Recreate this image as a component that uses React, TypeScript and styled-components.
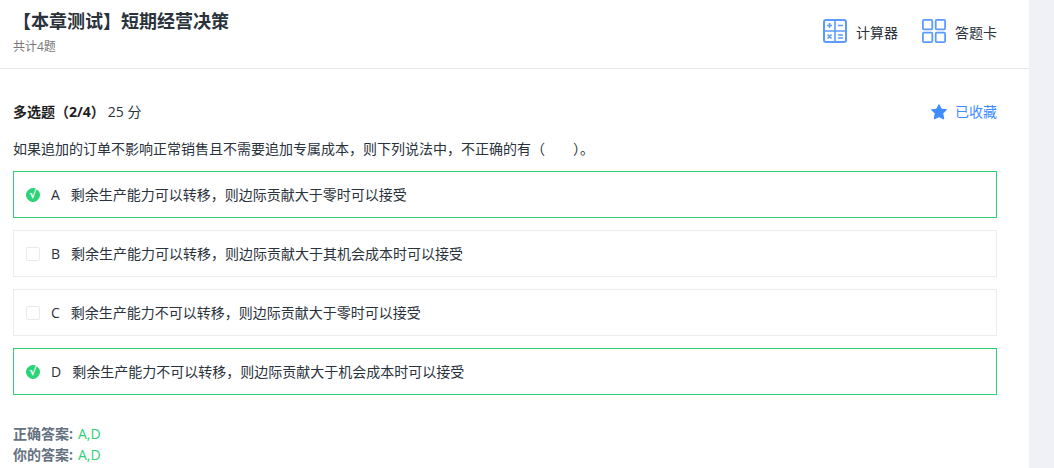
import React, { useState } from "react";
import styled, { createGlobalStyle } from "styled-components";

const GlobalStyle = createGlobalStyle`
  * { box-sizing: border-box; }
  body {
    margin: 0;
    background: #eff1f6;
    color: #2a323c;
    font-family: "Open Sans", "Noto Sans CJK SC", sans-serif;
    font-size: 14px;
    line-height: 20px;
  }
  button, input { font: inherit; }
`;

const Page = styled.div`
  min-height: 100vh;
  margin-right: 25px;
  background: #fff;
`;

const Header = styled.header`
  display: flex;
  justify-content: space-between;
  align-items: flex-start;
  padding: 8px 32px 11px 13px;
  border-bottom: 1px solid #e6e6e8;
`;

const Title = styled.h1`
  margin: 0 0 3px;
  font-size: 18px;
  line-height: 26px;
  font-weight: 700;
`;

const Subtitle = styled.p`
  margin: 0;
  color: #777;
  font-size: 12px;
  line-height: 20px;
`;

const Tools = styled.nav`
  display: flex;
  gap: 24px;
  padding-top: 11px;
`;

const IconButton = styled.button<{ $accent?: boolean }>`
  display: flex;
  align-items: center;
  gap: ${(p) => (p.$accent ? 8 : 9)}px;
  padding: 0;
  border: 0;
  background: none;
  color: ${(p) => (p.$accent ? "#3f8cff" : "#2a323c")};
  line-height: 20px;
  cursor: pointer;

  svg { flex: none; }
  span { padding-top: ${(p) => (p.$accent ? 0 : 4)}px; }
`;

const Main = styled.main`
  padding: 33px 32px 0 13px;
`;

const QuestionBar = styled.div`
  display: flex;
  justify-content: space-between;
  align-items: center;
  margin-bottom: 17px;
`;

const QuestionType = styled.h2`
  display: flex;
  gap: 3px;
  margin: 0;
  font-size: 14px;
  line-height: 20px;
  font-weight: 400;

  strong { color: #1e1e1e; font-weight: 700; }
`;

const Question = styled.fieldset`
  min-width: 0;
  margin: 0;
  padding: 0;
  border: 0;
`;

const Stem = styled.legend`
  padding: 0 0 12px;
  line-height: 20px;
  white-space: pre-wrap;
`;

const Options = styled.div`
  display: flex;
  flex-direction: column;
  gap: 12px;
`;

const Option = styled.label<{ $checked: boolean }>`
  display: flex;
  align-items: center;
  min-height: 47px;
  padding: 0 12px;
  border: 1px solid ${(p) => (p.$checked ? "#2fcf78" : "#ebecf0")};
  cursor: pointer;
`;

const Check = styled.input`
  appearance: none;
  display: grid;
  place-items: center;
  flex: none;
  width: 14px;
  height: 14px;
  margin: 0 11px 0 0;
  border: 1px solid #e8eaf0;
  border-radius: 2px;
  background: #fff;

  &:checked {
    border-color: #2bd377;
    border-radius: 50%;
    background: #2bd377;
  }
  &:checked::before {
    content: "√";
    color: #fff;
    font-family: "DejaVu Sans", sans-serif;
    font-size: 11px;
    font-weight: 700;
    line-height: 12px;
  }
`;

const Letter = styled.span`
  margin-right: 11px;
`;

const Answers = styled.dl`
  margin: 28px 0 0;
  line-height: 21px;
`;

const Answer = styled.div`
  display: flex;
  gap: 5px;

  dt { color: #66717f; font-weight: 700; }
  dd { margin: 0; color: #2fcf78; }
`;

const CalculatorIcon = () => (
  <svg width="24" height="24" viewBox="0 0 24 24" fill="none" stroke="#5b9bff" strokeWidth="1.6" aria-hidden="true">
    <rect x="1" y="1" width="22" height="22" rx="2" strokeWidth="2" />
    <path d="M12 1v22M1 12h22" />
    <path d="M4 6.5h5M6.5 4v5M15 6.5h5M4.5 15.5l4 4M8.5 15.5l-4 4M15 16h5M15 19h5" />
  </svg>
);

const GridIcon = () => (
  <svg width="24" height="24" viewBox="0 0 24 24" fill="none" stroke="#5b9bff" strokeWidth="1.8" aria-hidden="true">
    <rect x="0.9" y="0.9" width="9.4" height="9.4" rx="1" />
    <rect x="13.7" y="0.9" width="9.4" height="9.4" rx="1" />
    <rect x="0.9" y="13.7" width="9.4" height="9.4" rx="1" />
    <rect x="13.7" y="13.7" width="9.4" height="9.4" rx="1" />
  </svg>
);

const StarIcon = () => (
  <svg width="16" height="16" viewBox="0 0 16 16" fill="#3f8cff" stroke="#3f8cff" strokeWidth="1" strokeLinejoin="round" aria-hidden="true">
    <path d="M8 .6l2.3 4.5 5.2.7-3.7 3.6.9 5.6L8 12.7 3.3 15l.9-5.6L.5 5.8l5.2-.7z" />
  </svg>
);

const options = [
  { id: "A", text: "剩余生产能力可以转移，则边际贡献大于零时可以接受" },
  { id: "B", text: "剩余生产能力可以转移，则边际贡献大于其机会成本时可以接受" },
  { id: "C", text: "剩余生产能力不可以转移，则边际贡献大于零时可以接受" },
  { id: "D", text: "剩余生产能力不可以转移，则边际贡献大于机会成本时可以接受" },
];

export default function App() {
  const [selected, setSelected] = useState<string[]>(["A", "D"]);

  const toggle = (id: string) =>
    setSelected((s) => (s.includes(id) ? s.filter((x) => x !== id) : [...s, id].sort()));

  return (
    <>
      <GlobalStyle />
      <Page lang="zh-CN">
        <Header>
          <div>
            <Title>【本章测试】短期经营决策</Title>
            <Subtitle>共计4题</Subtitle>
          </div>
          <Tools>
            <IconButton type="button"><CalculatorIcon /><span>计算器</span></IconButton>
            <IconButton type="button"><GridIcon /><span>答题卡</span></IconButton>
          </Tools>
        </Header>
        <Main>
          <QuestionBar>
            <QuestionType><strong>多选题（2/4）</strong><span>25 分</span></QuestionType>
            <IconButton type="button" $accent><StarIcon /><span>已收藏</span></IconButton>
          </QuestionBar>
          <Question>
            <Stem>{"如果追加的订单不影响正常销售且不需要追加专属成本，则下列说法中，不正确的有（\u3000\u3000）。"}</Stem>
            <Options>
              {options.map((o) => (
                <Option key={o.id} $checked={selected.includes(o.id)}>
                  <Check type="checkbox" checked={selected.includes(o.id)} onChange={() => toggle(o.id)} />
                  <Letter>{o.id}</Letter>
                  <span>{o.text}</span>
                </Option>
              ))}
            </Options>
          </Question>
          <Answers>
            <Answer><dt>正确答案:</dt><dd>A,D</dd></Answer>
            <Answer><dt>你的答案:</dt><dd>{selected.join(",")}</dd></Answer>
          </Answers>
        </Main>
      </Page>
    </>
  );
}
